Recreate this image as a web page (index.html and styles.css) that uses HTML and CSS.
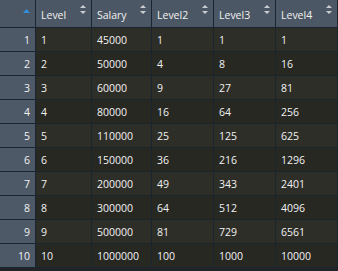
FILE: index.html
```html
<!DOCTYPE html>
<html>
<head>
<meta charset="utf-8">
<link rel="stylesheet" href="styles.css">
</head>
<body>
<div class="grid">
  <div class="row head">
    <div class="cell corner"><svg class="asc" width="7" height="4" viewBox="0 0 7 4"><polygon points="0,4 3.5,0 7,4" fill="#2f8fdc"/></svg></div>
    <div class="cell hcell"><span>Level</span><svg class="sort" width="6" height="9" viewBox="0 0 6 9"><polygon points="0,3 3,0 6,3" /><polygon points="0,6 6,6 3,9" /></svg></div>
    <div class="cell hcell"><span>Salary</span><svg class="sort" width="6" height="9" viewBox="0 0 6 9"><polygon points="0,3 3,0 6,3" /><polygon points="0,6 6,6 3,9" /></svg></div>
    <div class="cell hcell"><span>Level2</span><svg class="sort" width="6" height="9" viewBox="0 0 6 9"><polygon points="0,3 3,0 6,3" /><polygon points="0,6 6,6 3,9" /></svg></div>
    <div class="cell hcell"><span>Level3</span><svg class="sort" width="6" height="9" viewBox="0 0 6 9"><polygon points="0,3 3,0 6,3" /><polygon points="0,6 6,6 3,9" /></svg></div>
    <div class="cell hcell"><span>Level4</span><svg class="sort" width="6" height="9" viewBox="0 0 6 9"><polygon points="0,3 3,0 6,3" /><polygon points="0,6 6,6 3,9" /></svg></div>
  </div>
  <div class="row odd"><div class="cell idx">1</div><div class="cell">1</div><div class="cell">45000</div><div class="cell">1</div><div class="cell">1</div><div class="cell">1</div></div>
  <div class="row even"><div class="cell idx">2</div><div class="cell">2</div><div class="cell">50000</div><div class="cell">4</div><div class="cell">8</div><div class="cell">16</div></div>
  <div class="row odd"><div class="cell idx">3</div><div class="cell">3</div><div class="cell">60000</div><div class="cell">9</div><div class="cell">27</div><div class="cell">81</div></div>
  <div class="row even"><div class="cell idx">4</div><div class="cell">4</div><div class="cell">80000</div><div class="cell">16</div><div class="cell">64</div><div class="cell">256</div></div>
  <div class="row odd"><div class="cell idx">5</div><div class="cell">5</div><div class="cell">110000</div><div class="cell">25</div><div class="cell">125</div><div class="cell">625</div></div>
  <div class="row even"><div class="cell idx">6</div><div class="cell">6</div><div class="cell">150000</div><div class="cell">36</div><div class="cell">216</div><div class="cell">1296</div></div>
  <div class="row odd"><div class="cell idx">7</div><div class="cell">7</div><div class="cell">200000</div><div class="cell">49</div><div class="cell">343</div><div class="cell">2401</div></div>
  <div class="row even"><div class="cell idx">8</div><div class="cell">8</div><div class="cell">300000</div><div class="cell">64</div><div class="cell">512</div><div class="cell">4096</div></div>
  <div class="row odd"><div class="cell idx">9</div><div class="cell">9</div><div class="cell">500000</div><div class="cell">81</div><div class="cell">729</div><div class="cell">6561</div></div>
  <div class="row even"><div class="cell idx">10</div><div class="cell">10</div><div class="cell">1000000</div><div class="cell">100</div><div class="cell">1000</div><div class="cell">10000</div></div>
</div>
</body>
</html>
```
FILE: styles.css
```css
html, body {
  margin: 0;
  padding: 0;
  background: #222326;
  height: 100%;
  overflow: hidden;
}
.grid {
  display: grid;
  grid-template-columns: 35px 55px 59px 61px 61px 61px;
  grid-template-rows: 27px repeat(10, 23px);
  gap: 1px;
  background: #1b2530;
  padding-bottom: 1px;
  font-family: "Open Sans", "Noto Sans", sans-serif;
  font-size: 10.5px;
  color: #f2f2f2;
}
.row {
  display: contents;
}
.cell {
  display: flex;
  align-items: center;
  padding: 0 5px;
  white-space: nowrap;
  overflow: hidden;
}
.odd .cell {
  background: #2e2e28;
}
.even .cell {
  background: #272822;
}
.row .idx {
  background: #4d5966;
  justify-content: flex-end;
}
.head .cell {
  background: #4b5764;
}
.hcell {
  justify-content: space-between;
}
.hcell span {
  padding-top: 3px;
}
.sort {
  align-self: flex-start;
  margin-top: 5px;
  margin-right: 0;
  fill: #c9cdd2;
}
.corner {
  justify-content: flex-end;
}
.asc {
  align-self: flex-start;
  margin-top: 9px;
  margin-right: 0;
}
```
